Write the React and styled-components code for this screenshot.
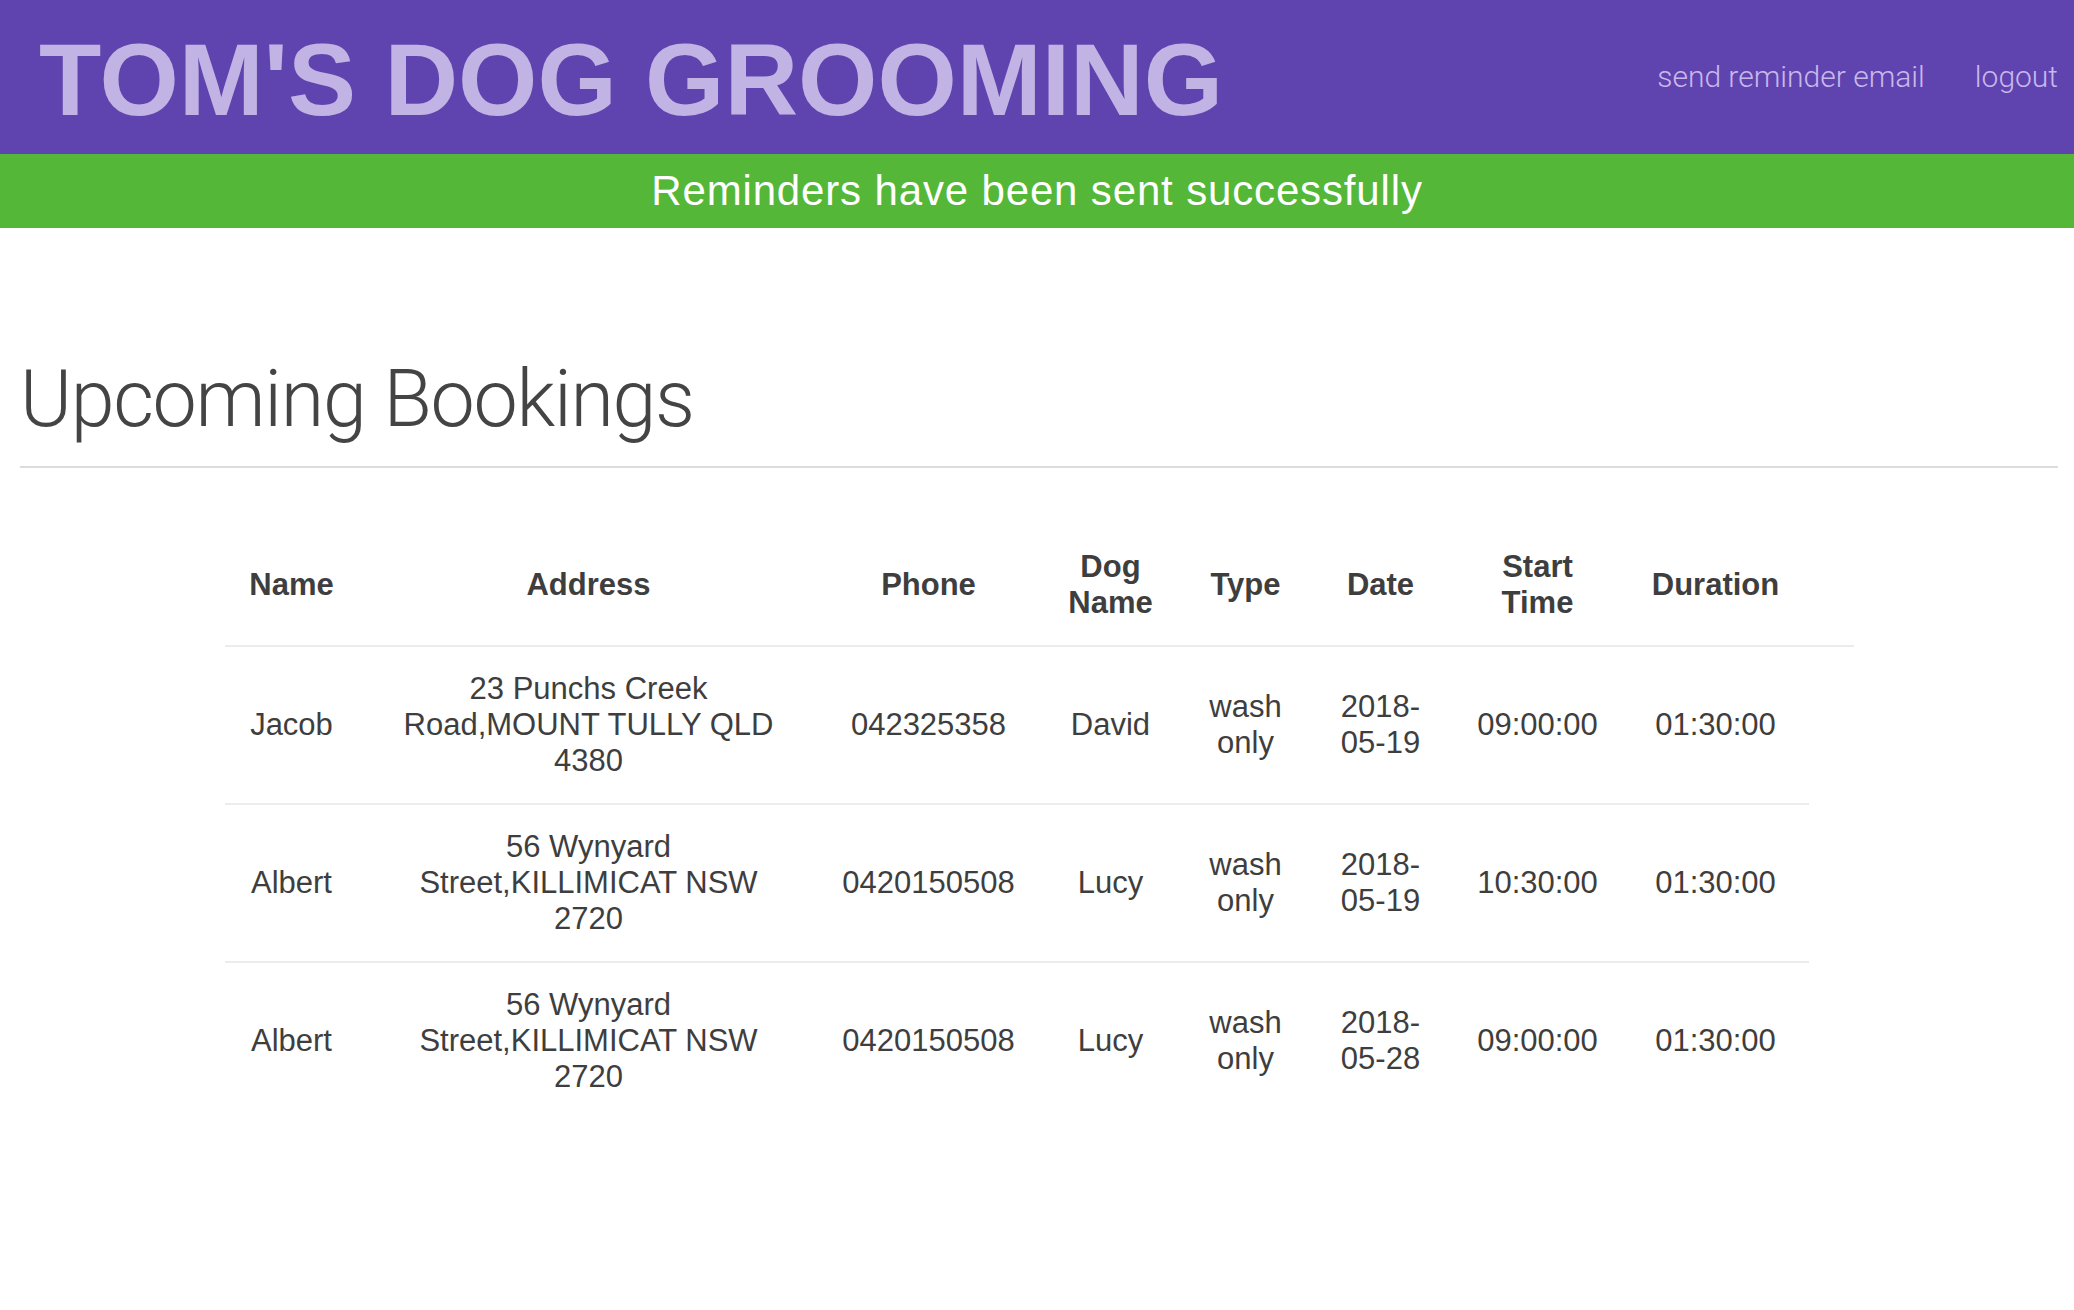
import styled, { createGlobalStyle } from "styled-components";

const bookings = [
  {
    name: "Jacob",
    address: "23 Punchs Creek Road,MOUNT TULLY QLD 4380",
    phone: "042325358",
    dog: "David",
    type: "wash only",
    date: "2018-05-19",
    start: "09:00:00",
    duration: "01:30:00",
  },
  {
    name: "Albert",
    address: "56 Wynyard Street,KILLIMICAT NSW 2720",
    phone: "0420150508",
    dog: "Lucy",
    type: "wash only",
    date: "2018-05-19",
    start: "10:30:00",
    duration: "01:30:00",
  },
  {
    name: "Albert",
    address: "56 Wynyard Street,KILLIMICAT NSW 2720",
    phone: "0420150508",
    dog: "Lucy",
    type: "wash only",
    date: "2018-05-28",
    start: "09:00:00",
    duration: "01:30:00",
  },
];

// widths of the columns, last one is the empty header cell
const columns = [134, 460, 220, 144, 126, 144, 170, 186, 45];

export default function App() {
  return (
    <Page>
      <GlobalStyle />
      <Header>
        <Title>TOM'S DOG GROOMING</Title>
        <Nav>
          <NavLink href="#">send reminder email</NavLink>
          <NavLink href="#">logout</NavLink>
        </Nav>
      </Header>
      <Banner>Reminders have been sent successfully</Banner>
      <Content>
        <Heading>Upcoming Bookings</Heading>
        <Divider />
        <Table>
          <colgroup>
            {columns.map((w, i) => (
              <col key={i} style={{ width: w }} />
            ))}
          </colgroup>
          <thead>
            <tr>
              <Th>Name</Th>
              <Th>Address</Th>
              <Th>Phone</Th>
              <Th>Dog Name</Th>
              <Th>Type</Th>
              <Th>Date</Th>
              <Th>Start Time</Th>
              <Th>Duration</Th>
              <Th />
            </tr>
          </thead>
          <tbody>
            {bookings.map((b, i) => (
              <tr key={i}>
                <Td>{b.name}</Td>
                <Td>
                  <Address>{b.address}</Address>
                </Td>
                <Td>{b.phone}</Td>
                <Td>{b.dog}</Td>
                <Td>{b.type}</Td>
                <Td>{b.date}</Td>
                <Td>{b.start}</Td>
                <Td>{b.duration}</Td>
              </tr>
            ))}
          </tbody>
        </Table>
      </Content>
    </Page>
  );
}

const GlobalStyle = createGlobalStyle`
  body {
    margin: 0;
    background: #fff;
    font-family: "Liberation Sans", Arial, sans-serif;
  }
`;

const Page = styled.div`
  min-height: 100vh;
  background: #fff;
`;

const Header = styled.header`
  display: flex;
  justify-content: space-between;
  align-items: center;
  height: 154px;
  padding: 0 16px 0 39px;
  box-sizing: border-box;
  background-color: #5f44b0;
`;

const Title = styled.h1`
  margin: 6px 0 0;
  font-family: "Liberation Sans", Arial, sans-serif;
  font-size: 102px;
  line-height: 1;
  font-weight: 700;
  color: #c1b3e3;
`;

const Nav = styled.nav`
  display: flex;
  gap: 50px;
`;

const NavLink = styled.a`
  font-family: Roboto, "Liberation Sans", sans-serif;
  font-weight: 300;
  font-size: 30px;
  line-height: 1;
  color: #c9b8ec;
  text-decoration: none;
`;

const Banner = styled.div`
  height: 74px;
  display: flex;
  align-items: center;
  justify-content: center;
  background-color: #54b737;
  color: #fff;
  font-size: 42px;
  letter-spacing: 0.85px;
`;

const Content = styled.main`
  padding: 127px 16px 0 20px;
`;

const Heading = styled.h2`
  margin: 0;
  font-family: Roboto, "Liberation Sans", sans-serif;
  font-weight: 300;
  font-size: 79px;
  line-height: 88px;
  letter-spacing: -1.3px;
  color: #444;
`;

const Divider = styled.hr`
  margin: 23px 0 0;
  border: 0;
  border-top: 2px solid #dcdcdc;
`;

const Table = styled.table`
  width: 1629px;
  margin: 57px auto 0;
  table-layout: fixed;
  border-collapse: collapse;
  color: #3e3e3e;
  font-size: 31px;
  line-height: 36px;
`;

const Th = styled.th`
  padding: 24px 16px;
  text-align: center;
  vertical-align: middle;
  font-weight: 700;
  border-bottom: 2px solid #ececec;
`;

const Td = styled.td`
  padding: 24px 16px;
  text-align: center;
  vertical-align: middle;
  border-top: 2px solid #ececec;
`;

const Address = styled.div`
  max-width: 396px;
  margin: 0 auto;
`;
